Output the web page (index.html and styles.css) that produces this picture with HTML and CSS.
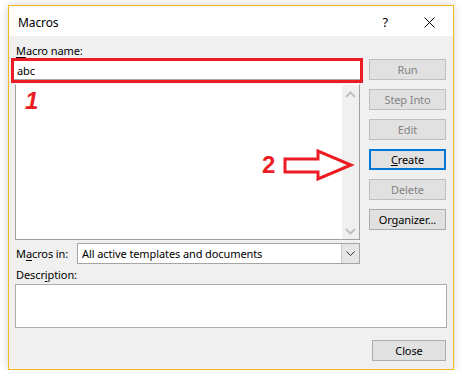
FILE: index.html
```html
<!DOCTYPE html>
<html lang="en">

<head>
    <meta charset="UTF-8">
    <title>Macros</title>
    <link rel="stylesheet" href="styles.css">
</head>

<body>
    <div class="dialog">
        <div class="titlebar">
            <span class="title">Macros</span>
            <span class="help">?</span>
            <svg class="close-x" width="11" height="11" viewBox="0 0 11 11">
                <path d="M0.5 0.5 L10.5 10.5 M10.5 0.5 L0.5 10.5" stroke="#000" stroke-width="1" fill="none" />
            </svg>
        </div>

        <div class="content">
            <div class="top">
                <div class="left">
                    <label class="label" for="macroName"><u>M</u>acro name:</label>
                    <div class="name-box">
                        <input type="text" id="macroName" value="abc">
                    </div>
                    <div class="list">
                        <span class="mark mark-1">1</span>
                        <span class="mark mark-2">2</span>
                        <!-- arrow pointing at Create -->
                        <svg class="arrow" width="74" height="34" viewBox="0 0 74 34">
                            <polygon points="3,11 36,11 36,3 69,17 36,31 36,24 3,24" fill="none" stroke="#ed1c24" stroke-width="3" />
                        </svg>
                        <div class="scrollbar">
                            <svg width="11" height="7" viewBox="0 0 11 7"><path d="M1 6 L5.5 1.5 L10 6" stroke="#c2c2c2" stroke-width="2" fill="none" /></svg>
                            <svg width="11" height="7" viewBox="0 0 11 7"><path d="M1 1 L5.5 5.5 L10 1" stroke="#c2c2c2" stroke-width="2" fill="none" /></svg>
                        </div>
                    </div>
                    <div class="macros-in">
                        <span class="label">M<u>a</u>cros in:</span>
                        <div class="combo">
                            <span class="combo-text">All active templates and documents</span>
                            <span class="combo-btn">
                                <svg width="9" height="5" viewBox="0 0 9 5"><path d="M0.5 0.5 L4.5 4.5 L8.5 0.5" stroke="#333" stroke-width="1" fill="none" /></svg>
                            </span>
                        </div>
                    </div>
                </div>

                <div class="buttons">
                    <button class="btn" disabled>Run</button>
                    <button class="btn" disabled>Step Into</button>
                    <button class="btn" disabled>Edit</button>
                    <button class="btn btn-default"><u>C</u>reate</button>
                    <button class="btn" disabled>Delete</button>
                    <button class="btn">Or<u>g</u>anizer...</button>
                </div>
            </div>

            <div class="label desc-label">Descr<u>i</u>ption:</div>
            <div class="desc-box"></div>

            <div class="footer">
                <button class="btn btn-close">Close</button>
            </div>
        </div>
    </div>
</body>

</html>
```

FILE: styles.css
```css
body {
    margin: 0;
    background-color: #fff;
    font-family: "Noto Sans", "Open Sans", sans-serif;
    font-size: 11px;
    letter-spacing: -0.1px;
    color: #000;
}

.dialog {
    width: 444px;
    margin: 5px 0 0 8px;
    border: 1px solid #f3b91c;
    background-color: #f0f0f0;
    box-shadow: 0 0 9px rgba(0, 0, 0, 0.18);
}

/* Title bar */
.titlebar {
    height: 30px;
    box-sizing: border-box;
    padding: 2px 0 0 9px;
    background-color: #fff;
    display: flex;
    align-items: center;
}

.title {
    font-size: 12px;
    flex: 1;
}

.help {
    font-size: 13px;
    margin-right: 36px;
}

.close-x {
    margin-right: 18px;
}

/* Body */
.content {
    padding: 7px 7px 8px 6px;
}

.top {
    display: flex;
    gap: 9px;
}

.left {
    width: 345px;
}

.label {
    display: block;
    height: 15px;
    line-height: 15px;
    padding-left: 1px;
}

.label u {
    text-underline-offset: 2px;
}

.name-box {
    margin: 0 -3px 0 -4px;
    border: 3px solid #ed1c24;
    height: 19px;
}

.name-box input {
    display: block;
    width: 100%;
    height: 19px;
    box-sizing: border-box;
    border: none;
    border-bottom: 1px solid #a5a5a5;
    padding: 0 0 0 3px;
    margin: 0;
    font-family: inherit;
    font-size: 11px;
    letter-spacing: -0.1px;
    outline: none;
}

.list {
    position: relative;
    height: 154px;
    margin-top: 1px;
    background-color: #fff;
    border: 1px solid #a0a0a0;
    border-top-color: #fff;
    display: flex;
    justify-content: flex-end;
}

.scrollbar {
    width: 17px;
    background-color: #f0f0f0;
    display: flex;
    flex-direction: column;
    justify-content: space-between;
    align-items: center;
    padding: 6px 0 4px;
    box-sizing: border-box;
}

.mark {
    position: absolute;
    color: #ed1c24;
    font-family: "Liberation Sans", sans-serif;
    font-weight: bold;
    font-size: 24px;
    line-height: 24px;
    letter-spacing: 0;
}

.mark-1 {
    left: 9px;
    top: 4px;
    font-style: italic;
}

.mark-2 {
    left: 246px;
    top: 68px;
}

.arrow {
    position: absolute;
    left: 266px;
    top: 63px;
}

.macros-in {
    display: flex;
    align-items: center;
    margin-top: 3px;
}

.macros-in .label {
    width: 61px;
}

.combo {
    flex: 1;
    height: 19px;
    border: 1px solid #a5a5a5;
    background-color: #fff;
    display: flex;
    align-items: center;
}

.combo-text {
    flex: 1;
    padding-left: 4px;
}

.combo-btn {
    width: 17px;
    height: 19px;
    background-color: #e5e5e5;
    border-left: 1px solid #c8c8c8;
    display: flex;
    align-items: center;
    justify-content: center;
}

/* Buttons */
.buttons {
    width: 77px;
    padding-top: 16px;
    display: flex;
    flex-direction: column;
    gap: 9px;
}

.btn {
    height: 21px;
    padding: 0;
    border: 1px solid #adadad;
    background-color: #e1e1e1;
    font-family: inherit;
    font-size: 11px;
    letter-spacing: -0.1px;
    color: #000;
}

.btn:disabled {
    color: #838383;
    border-color: #bfbfbf;
    background-color: #e1e1e1;
}

.btn-default {
    border: 2px solid #0078d7;
}

.desc-label {
    margin-top: 3px;
}

.desc-box {
    width: 430px;
    height: 42px;
    margin-top: 2px;
    border: 1px solid #adadad;
    background-color: #fff;
}

.footer {
    display: flex;
    justify-content: flex-end;
    margin-top: 12px;
}

.btn-close {
    width: 74px;
}
```
